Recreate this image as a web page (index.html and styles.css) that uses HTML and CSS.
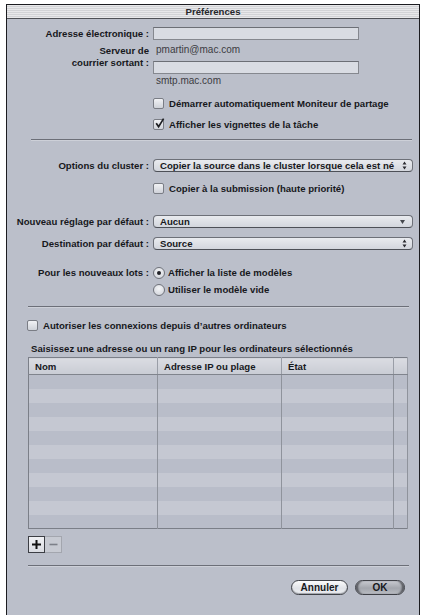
FILE: index.html
```html
<!DOCTYPE html>
<html lang="fr">
<head>
  <meta charset="UTF-8">
  <title>Préférences</title>
  <link rel="stylesheet" href="styles.css">
</head>
<body>

<div class="window">
  <div class="titlebar">Préférences</div>

  <div class="row row-email">
    <div class="lbl">Adresse électronique :</div>
    <div class="text-input"></div>
  </div>

  <div class="row row-server">
    <div class="lbl lbl-two">Serveur de<br>courrier sortant :</div>
    <div>
      <div class="value">pmartin@mac.com</div>
      <div class="text-input input-smtp"></div>
      <div class="value value-smtp">smtp.mac.com</div>
    </div>
  </div>

  <div class="check indent cb-partage"><span class="box"></span>Démarrer automatiquement Moniteur de partage</div>
  <div class="check indent cb-vignettes">
    <span class="box"><svg width="11" height="11" viewBox="0 0 11 11"><path d="M2.2 5.2 L4.6 8.6 L9.6 0.6" fill="none" stroke="#1d1e22" stroke-width="1.7"/></svg></span>Afficher les vignettes de la tâche
  </div>

  <div class="sep sep-top"></div>

  <div class="row row-cluster">
    <div class="lbl">Options du cluster :</div>
    <div class="popup">
      <span>Copier la source dans le cluster lorsque cela est né</span>
      <svg class="stepper" width="5" height="9" viewBox="0 0 5 9"><path d="M0.5 3.5 L2.5 0.5 L4.5 3.5 Z M0.5 5.5 L2.5 8.5 L4.5 5.5 Z" fill="#2a2b30"/></svg>
    </div>
  </div>
  <div class="check indent cb-copier"><span class="box"></span>Copier à la submission (haute priorité)</div>

  <div class="row row-reglage">
    <div class="lbl">Nouveau réglage par défaut :</div>
    <div class="popup">
      <span>Aucun</span>
      <svg class="arrow" width="5" height="4" viewBox="0 0 5 4"><path d="M0 0 L5 0 L2.5 4 Z" fill="#45474d"/></svg>
    </div>
  </div>
  <div class="row row-dest">
    <div class="lbl">Destination par défaut :</div>
    <div class="popup">
      <span>Source</span>
      <svg class="stepper" width="5" height="9" viewBox="0 0 5 9"><path d="M0.5 3.5 L2.5 0.5 L4.5 3.5 Z M0.5 5.5 L2.5 8.5 L4.5 5.5 Z" fill="#2a2b30"/></svg>
    </div>
  </div>

  <div class="row row-lots">
    <div class="lbl">Pour les nouveaux lots :</div>
    <div class="radios">
      <div class="check"><span class="radio on"></span>Afficher la liste de modèles</div>
      <div class="check"><span class="radio"></span>Utiliser le modèle vide</div>
    </div>
  </div>

  <div class="sep sep-mid"></div>

  <div class="check cb-autoriser"><span class="box"></span>Autoriser les connexions depuis d’autres ordinateurs</div>
  <div class="hint">Saisissez une adresse ou un rang IP pour les ordinateurs sélectionnés</div>

  <table class="hosts">
    <colgroup>
      <col class="c-nom"><col class="c-ip"><col class="c-etat"><col class="c-end">
    </colgroup>
    <thead>
      <tr><th>Nom</th><th>Adresse IP ou plage</th><th>État</th><th></th></tr>
    </thead>
    <tbody>
      <tr><td></td><td></td><td></td><td></td></tr>
      <tr><td></td><td></td><td></td><td></td></tr>
      <tr><td></td><td></td><td></td><td></td></tr>
      <tr><td></td><td></td><td></td><td></td></tr>
      <tr><td></td><td></td><td></td><td></td></tr>
      <tr><td></td><td></td><td></td><td></td></tr>
      <tr><td></td><td></td><td></td><td></td></tr>
      <tr><td></td><td></td><td></td><td></td></tr>
      <tr><td></td><td></td><td></td><td></td></tr>
      <tr><td></td><td></td><td></td><td></td></tr>
      <tr><td></td><td></td><td></td><td></td></tr>
    </tbody>
  </table>

  <div class="plusminus">
    <span class="pm-btn pm-plus"><svg width="9" height="9" viewBox="0 0 9 9"><path d="M4.5 0 V9 M0 4.5 H9" stroke="#111" stroke-width="2"/></svg></span>
    <span class="pm-btn pm-minus"><svg width="9" height="9" viewBox="0 0 9 9"><path d="M0.5 4.5 H8.5" stroke="#7d8089" stroke-width="1.6"/></svg></span>
  </div>

  <div class="sep sep-bottom"></div>

  <div class="buttons">
    <span class="btn btn-cancel">Annuler</span>
    <span class="btn btn-ok">OK</span>
  </div>
</div>

</body>
</html>
```

FILE: styles.css
```css
* {
  box-sizing: border-box;
}
body {
  margin: 0;
  background-color: #ffffff;
  font-family: "Liberation Sans", Arial, sans-serif;
  font-size: 9.6px;
  color: #17181c;
}
.window {
  margin: 4px 0 0 6px;
  width: 414px;
  height: 611px;
  border: 1px solid #1c1c20;
  border-bottom: none;
  background-color: #bbbfca;
}
.titlebar {
  height: 14px;
  line-height: 13px;
  text-align: center;
  font-weight: bold;
  color: #26272b;
  background: repeating-linear-gradient(to bottom, #e8e8ea 0, #e8e8ea 1px, #d2d3d6 1px, #d2d3d6 2px);
  border-bottom: 1px solid #4f5156;
}

/* label / control rows */
.row {
  display: grid;
  grid-template-columns: 142px auto;
  column-gap: 4px;
  align-items: start;
}
.lbl {
  text-align: right;
  font-weight: bold;
  line-height: 13px;
  white-space: nowrap;
}
.lbl-two {
  padding-top: 1px;
  line-height: 12px;
}
.value {
  line-height: 12px;
  padding-left: 3px;
  color: #3b3c42;
  font-size: 10px;
}
.text-input {
  width: 206px;
  height: 13px;
  border: 1px solid #85888f;
  border-top-color: #6c6f76;
  background-color: #d9dce3;
}
.row-email { margin-top: 8px; }
.row-server { margin-top: 4px; }
.input-smtp { margin-top: 5px; }
.value-smtp { margin-top: 1px; }

/* checkboxes and radios */
.check {
  display: flex;
  align-items: center;
  height: 13px;
  font-weight: bold;
  white-space: nowrap;
}
.indent { padding-left: 146px; }
.box {
  width: 11px;
  height: 11px;
  margin-right: 5px;
  border: 1px solid #7a7d85;
  border-radius: 2px;
  background: linear-gradient(#f1f2f5, #cfd2d9);
  position: relative;
}
.box svg {
  position: absolute;
  left: 0;
  top: -2px;
}
.radio {
  width: 12px;
  height: 12px;
  margin-right: 3px;
  border: 1px solid #6f727a;
  border-radius: 50%;
  background: radial-gradient(circle at 50% 35%, #f4f5f7, #cdd0d7);
  display: flex;
  align-items: center;
  justify-content: center;
}
.radio.on::after {
  content: "";
  width: 4px;
  height: 4px;
  border-radius: 50%;
  background-color: #202126;
}
.radios .check + .check { margin-top: 4px; }
.cb-partage { margin-top: 10px; }
.cb-vignettes { margin-top: 8px; }
.cb-copier { margin-top: 10px; }
.cb-autoriser { margin-top: 11px; padding-left: 20px; }

/* popups */
.popup {
  width: 260px;
  height: 13px;
  display: flex;
  align-items: center;
  justify-content: space-between;
  padding: 0 5px 0 6px;
  border: 1px solid #6d7078;
  border-bottom-color: #4d5057;
  border-radius: 4px;
  background: linear-gradient(#e9ebef, #d3d6dd);
  font-weight: bold;
  white-space: nowrap;
  overflow: hidden;
  line-height: 11px;
}
.popup .arrow { margin-right: 2px; }
.row-cluster { margin-top: 18px; }
.row-reglage { margin-top: 20px; }
.row-dest { margin-top: 9px; }
.row-lots { margin-top: 16px; }

/* separators */
.sep {
  height: 2px;
  border-top: 1px solid #6c6f78;
  border-bottom: 1px solid #cdd0d8;
}
.sep-top { margin: 8px 7px 0 24px; }
.sep-mid { margin: 10px 10px 0 21px; }
.sep-bottom { margin: 12px 10px 0 21px; }

.hint {
  margin-top: 11px;
  padding-left: 24px;
  line-height: 12px;
  font-weight: bold;
  white-space: nowrap;
}

/* table */
.hosts {
  margin: 2px 0 0 21px;
  width: 379px;
  border-collapse: collapse;
  table-layout: fixed;
  border: 1px solid #7b7f88;
}
.c-nom { width: 129px; }
.c-ip { width: 124px; }
.c-etat { width: 112px; }
.c-end { width: 14px; }
.hosts th {
  height: 17px;
  padding: 0 0 0 6px;
  text-align: left;
  font-weight: bold;
  background: linear-gradient(#dadce2, #c9ccd4);
  border-bottom: 1px solid #80848d;
  border-right: 1px solid #9a9ea7;
}
.hosts td {
  height: 14px;
  padding: 0;
  border-right: 1px solid #8f939c;
}
.hosts tbody tr:nth-child(odd) { background-color: #b9bdc9; }
.hosts tbody tr:nth-child(even) { background-color: #c5c8d2; }

/* + / - */
.plusminus {
  display: flex;
  margin: 7px 0 0 21px;
}
.pm-btn {
  width: 17px;
  height: 17px;
  display: flex;
  align-items: center;
  justify-content: center;
}
.pm-plus {
  border: 1px solid #3c3e44;
  background: linear-gradient(#f0f1f4, #d9dbe1);
}
.pm-minus {
  border: 1px solid #a3a6ae;
  border-left: none;
  background-color: #c7cad2;
}

/* bottom buttons */
.buttons {
  display: flex;
  justify-content: flex-end;
  gap: 7px;
  margin-top: 13px;
  padding-right: 14px;
}
.btn {
  height: 15px;
  line-height: 13px;
  border: 1px solid #3f4147;
  border-radius: 8px;
  text-align: center;
  font-weight: bold;
  font-size: 10px;
}
.btn-cancel {
  width: 57px;
  background: linear-gradient(#fbfbfc, #e1e3e8 55%, #eef0f3);
  box-shadow: inset 0 -1px 1px #9ea1a8;
}
.btn-ok {
  width: 50px;
  background: linear-gradient(#c8cad0, #a3a6ad 55%, #b9bcc2);
  box-shadow: inset 3px 0 2px -1px #55575d, inset -3px 0 2px -1px #55575d;
}
```
